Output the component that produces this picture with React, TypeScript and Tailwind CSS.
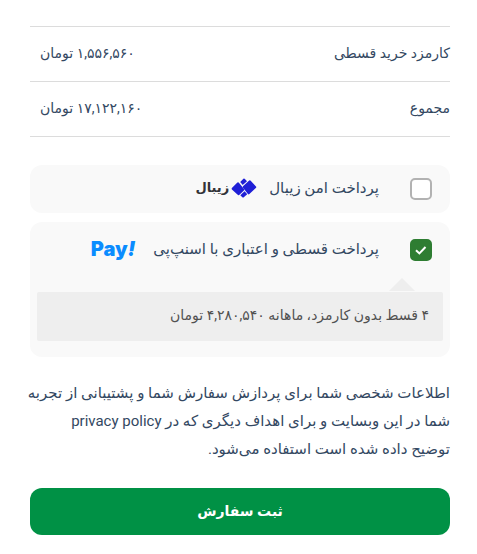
import type { ReactNode } from "react";
import { useState } from "react";

const totals = [
  { label: "کارمزد خرید قسطی", amount: "۱,۵۵۶,۵۶۰ تومان" },
  { label: "مجموع", amount: "۱۷,۱۲۲,۱۶۰ تومان" },
];

function ZibalLogo() {
  return (
    <span className="mr-3 flex items-center gap-0.5 pb-0.5" aria-label="زیبال">
      <svg width="26" height="20" viewBox="0 0 26 20" fill="#1f1fd6" aria-hidden="true">
        <path d="M12.2 8 18.2 2.6Q19 2 19.7 2.8L25 8.6Q25.6 9.4 24.8 10.1L18.4 16.1Q17.6 16.8 16.9 16L12 9.8Q11.4 8.8 12.2 8z" />
        <path d="M.9 10 6.4 4.6Q7.2 3.9 7.9 4.7L13 10.9Q13.7 11.7 12.9 12.4L8.2 16.9Q7.4 17.6 6.7 16.8L.9 11.5Q.2 10.7.9 10z" />
        <path d="M9.2 4 12.4.8Q13.2.2 13.9.9L16 3.2 11.7 7z" />
        <path d="M9.3 17.2 13.6 13.2 16.2 16.2 12.8 19.3Q12 19.9 11.3 19.2z" />
      </svg>
      <span className="text-[13px] leading-5 font-bold text-[#333338]">زیبال</span>
    </span>
  );
}

function SnappPayLogo() {
  return (
    <span dir="ltr" className="mr-[18px] pb-0.5 font-[Inter,sans-serif] text-xl leading-6 font-black text-[#0a8cff]">
      Pay<i>!</i>
    </span>
  );
}

function PaymentOption({
  title,
  logo,
  checked,
  onSelect,
  children,
}: {
  title: string;
  logo: ReactNode;
  checked: boolean;
  onSelect: () => void;
  children?: ReactNode;
}) {
  return (
    <li className="rounded-xl bg-[#f9f9f9]">
      <label className={`flex cursor-pointer items-center pr-[18px] ${children ? "h-14" : "h-12"}`}>
        <span className="relative ml-[31px] flex size-[22px]">
          <input
            type="checkbox"
            checked={checked}
            onChange={onSelect}
            className="size-[22px] appearance-none rounded-[5px] border-2 border-[#b2b2b2] bg-white checked:border-[#2e7d32] checked:bg-[#2e7d32]"
          />
          {checked && (
            <svg className="pointer-events-none absolute inset-0" width="22" height="22" viewBox="0 0 22 22" fill="none" aria-hidden="true">
              <path d="M6 11.2 9.4 14.4 15.5 8" stroke="#fff" strokeWidth="2" />
            </svg>
          )}
        </span>
        <span className="pb-0.5 text-[15px] leading-6">{title}</span>
        {logo}
      </label>
      {children}
    </li>
  );
}

export default function App() {
  const [method, setMethod] = useState("snapppay");

  return (
    <main
      dir="rtl"
      lang="fa"
      className="bg-white pt-[26px] pr-[27px] pl-[30px] font-[Roboto,'DejaVu_Sans',sans-serif] text-sm text-[#334862]"
    >
      <table className="w-full border-collapse">
        <tbody>
          {totals.map((row) => (
            <tr key={row.label} className="h-[55px] border-y border-[#dcdcdc]">
              <th scope="row" className="pb-0.5 text-right font-normal">
                {row.label}
              </th>
              <td className="pb-0.5 pl-2.5 text-left">{row.amount}</td>
            </tr>
          ))}
        </tbody>
      </table>

      <ul className="mt-7 flex flex-col gap-[9px]">
        <PaymentOption
          title="پرداخت امن زیبال"
          logo={<ZibalLogo />}
          checked={method === "zibal"}
          onSelect={() => setMethod("zibal")}
        />
        <PaymentOption
          title="پرداخت قسطی و اعتباری با اسنپ‌پی"
          logo={<SnappPayLogo />}
          checked={method === "snapppay"}
          onSelect={() => setMethod("snapppay")}
        >
          <div className="px-[7px] pb-4">
            <svg className="mr-7 mb-px block" width="26" height="13" viewBox="0 0 26 13" fill="#eeeeee" aria-hidden="true">
              <path d="M13 0 26 13H0z" />
            </svg>
            <p className="rounded-xs bg-[#eeeeee] px-3.5 pt-[11px] pb-3.5 leading-6 text-[#515151]">
              ۴ قسط بدون کارمزد، ماهانه ۴,۲۸۰,۵۴۰ تومان
            </p>
          </div>
        </PaymentOption>
      </ul>

      <p className="mt-[22px] -ml-1 text-[15px] leading-7">
        اطلاعات شخصی شما برای پردازش سفارش شما و پشتیبانی از تجربه شما در این وبسایت و برای اهداف
        دیگری که در privacy policy
        <br />
        توضیح داده شده است استفاده می‌شود.
      </p>

      <button
        type="button"
        className="mt-[25px] h-[47px] w-full rounded-xl bg-[#009145] pb-0.5 font-bold text-white"
      >
        ثبت سفارش
      </button>
    </main>
  );
}
